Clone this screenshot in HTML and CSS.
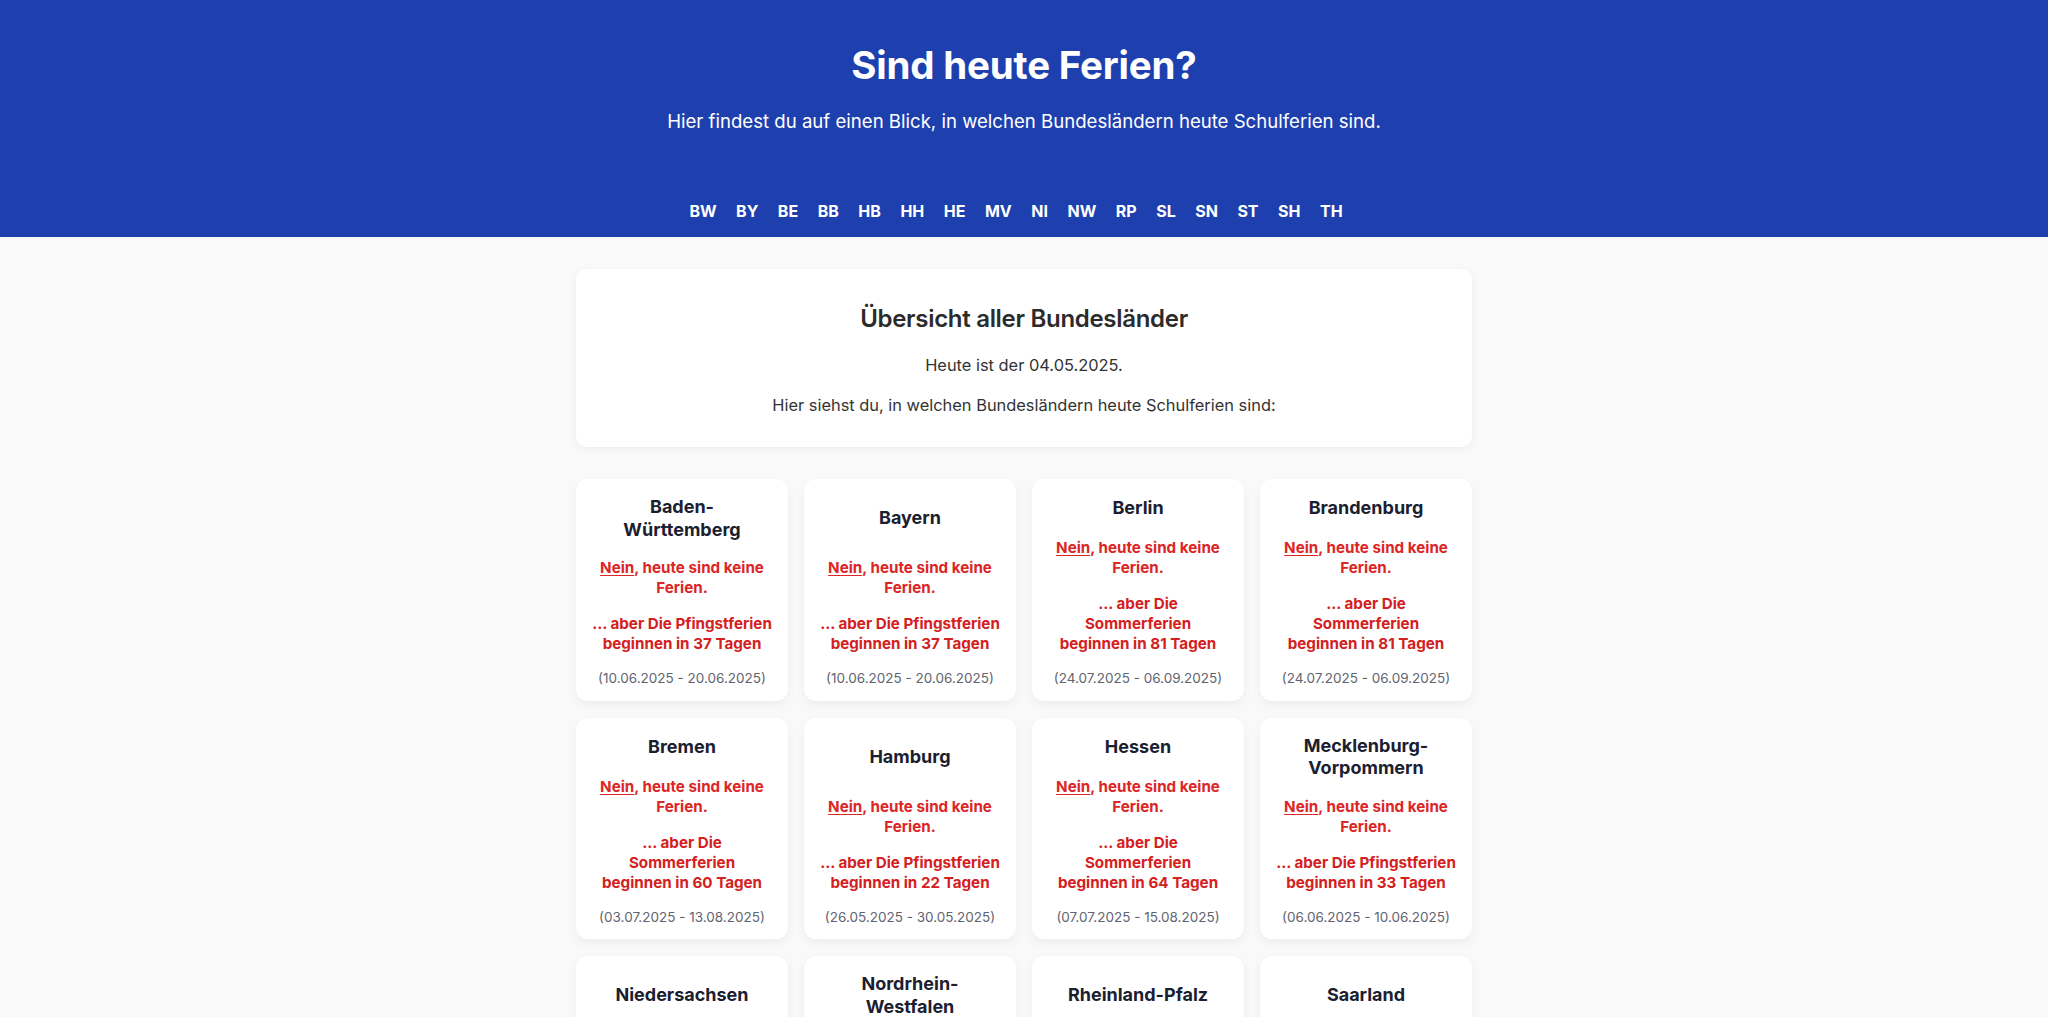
FILE: index.html
```html
<!DOCTYPE html>
<html lang="de">
<head>
<meta charset="utf-8">
<title>Sind heute Ferien?</title>
<link rel="stylesheet" href="styles.css">
</head>
<body>
<header class="hero">
  <h1 class="hero-title">Sind heute Ferien?</h1>
  <p class="hero-sub">Hier findest du auf einen Blick, in welchen Bundesländern heute Schulferien sind.</p>
  <nav class="states-nav">
    <a href="#bw">BW</a><a href="#by">BY</a><a href="#be">BE</a><a href="#bb">BB</a><a href="#hb">HB</a><a href="#hh">HH</a><a href="#he">HE</a><a href="#mv">MV</a><a href="#ni">NI</a><a href="#nw">NW</a><a href="#rp">RP</a><a href="#sl">SL</a><a href="#sn">SN</a><a href="#st">ST</a><a href="#sh">SH</a><a href="#th">TH</a>
  </nav>
</header>

<main class="container">
  <section class="overview">
    <h2 class="overview-title">Übersicht aller Bundesländer</h2>
    <p class="overview-text">Heute ist der 04.05.2025.</p>
    <p class="overview-text">Hier siehst du, in welchen Bundesländern heute Schulferien sind:</p>
  </section>

  <section class="grid">
    <article class="card" id="bw">
      <div class="card-head"><h3 class="card-title">Baden-Württemberg</h3></div>
      <p class="status"><a class="status-link" href="#">Nein</a>, heute sind keine Ferien.</p>
      <p class="next">... aber Die Pfingstferien <span class="next-count">beginnen in 37 Tagen</span></p>
      <p class="range">(10.06.2025 - 20.06.2025)</p>
    </article>
    <article class="card" id="by">
      <div class="card-head"><h3 class="card-title">Bayern</h3></div>
      <p class="status"><a class="status-link" href="#">Nein</a>, heute sind keine Ferien.</p>
      <p class="next">... aber Die Pfingstferien <span class="next-count">beginnen in 37 Tagen</span></p>
      <p class="range">(10.06.2025 - 20.06.2025)</p>
    </article>
    <article class="card" id="be">
      <div class="card-head"><h3 class="card-title">Berlin</h3></div>
      <p class="status"><a class="status-link" href="#">Nein</a>, heute sind keine Ferien.</p>
      <p class="next">... aber Die Sommerferien <span class="next-count">beginnen in 81 Tagen</span></p>
      <p class="range">(24.07.2025 - 06.09.2025)</p>
    </article>
    <article class="card" id="bb">
      <div class="card-head"><h3 class="card-title">Brandenburg</h3></div>
      <p class="status"><a class="status-link" href="#">Nein</a>, heute sind keine Ferien.</p>
      <p class="next">... aber Die Sommerferien <span class="next-count">beginnen in 81 Tagen</span></p>
      <p class="range">(24.07.2025 - 06.09.2025)</p>
    </article>
    <article class="card" id="hb">
      <div class="card-head"><h3 class="card-title">Bremen</h3></div>
      <p class="status"><a class="status-link" href="#">Nein</a>, heute sind keine Ferien.</p>
      <p class="next">... aber Die Sommerferien <span class="next-count">beginnen in 60 Tagen</span></p>
      <p class="range">(03.07.2025 - 13.08.2025)</p>
    </article>
    <article class="card" id="hh">
      <div class="card-head"><h3 class="card-title">Hamburg</h3></div>
      <p class="status"><a class="status-link" href="#">Nein</a>, heute sind keine Ferien.</p>
      <p class="next">... aber Die Pfingstferien <span class="next-count">beginnen in 22 Tagen</span></p>
      <p class="range">(26.05.2025 - 30.05.2025)</p>
    </article>
    <article class="card" id="he">
      <div class="card-head"><h3 class="card-title">Hessen</h3></div>
      <p class="status"><a class="status-link" href="#">Nein</a>, heute sind keine Ferien.</p>
      <p class="next">... aber Die Sommerferien <span class="next-count">beginnen in 64 Tagen</span></p>
      <p class="range">(07.07.2025 - 15.08.2025)</p>
    </article>
    <article class="card" id="mv">
      <div class="card-head"><h3 class="card-title">Mecklenburg-Vorpommern</h3></div>
      <p class="status"><a class="status-link" href="#">Nein</a>, heute sind keine Ferien.</p>
      <p class="next">... aber Die Pfingstferien <span class="next-count">beginnen in 33 Tagen</span></p>
      <p class="range">(06.06.2025 - 10.06.2025)</p>
    </article>
    <article class="card" id="ni">
      <div class="card-head"><h3 class="card-title">Niedersachsen</h3></div>
      <p class="status"><a class="status-link" href="#">Nein</a>, heute sind keine Ferien.</p>
      <p class="next">... aber Die Sommerferien <span class="next-count">beginnen in 60 Tagen</span></p>
      <p class="range">(03.07.2025 - 13.08.2025)</p>
    </article>
    <article class="card" id="nw">
      <div class="card-head"><h3 class="card-title">Nordrhein-Westfalen</h3></div>
      <p class="status"><a class="status-link" href="#">Nein</a>, heute sind keine Ferien.</p>
      <p class="next">... aber Die Sommerferien <span class="next-count">beginnen in 71 Tagen</span></p>
      <p class="range">(14.07.2025 - 26.08.2025)</p>
    </article>
    <article class="card" id="rp">
      <div class="card-head"><h3 class="card-title">Rheinland-Pfalz</h3></div>
      <p class="status"><a class="status-link" href="#">Nein</a>, heute sind keine Ferien.</p>
      <p class="next">... aber Die Sommerferien <span class="next-count">beginnen in 64 Tagen</span></p>
      <p class="range">(07.07.2025 - 15.08.2025)</p>
    </article>
    <article class="card" id="sl">
      <div class="card-head"><h3 class="card-title">Saarland</h3></div>
      <p class="status"><a class="status-link" href="#">Nein</a>, heute sind keine Ferien.</p>
      <p class="next">... aber Die Sommerferien <span class="next-count">beginnen in 64 Tagen</span></p>
      <p class="range">(07.07.2025 - 14.08.2025)</p>
    </article>
    <article class="card" id="sn">
      <div class="card-head"><h3 class="card-title">Sachsen</h3></div>
      <p class="status"><a class="status-link" href="#">Nein</a>, heute sind keine Ferien.</p>
      <p class="next">... aber Die Sommerferien <span class="next-count">beginnen in 55 Tagen</span></p>
      <p class="range">(28.06.2025 - 08.08.2025)</p>
    </article>
    <article class="card" id="st">
      <div class="card-head"><h3 class="card-title">Sachsen-Anhalt</h3></div>
      <p class="status"><a class="status-link" href="#">Nein</a>, heute sind keine Ferien.</p>
      <p class="next">... aber Die Sommerferien <span class="next-count">beginnen in 55 Tagen</span></p>
      <p class="range">(28.06.2025 - 08.08.2025)</p>
    </article>
    <article class="card" id="sh">
      <div class="card-head"><h3 class="card-title">Schleswig-Holstein</h3></div>
      <p class="status"><a class="status-link" href="#">Nein</a>, heute sind keine Ferien.</p>
      <p class="next">... aber Die Sommerferien <span class="next-count">beginnen in 85 Tagen</span></p>
      <p class="range">(28.07.2025 - 06.09.2025)</p>
    </article>
    <article class="card" id="th">
      <div class="card-head"><h3 class="card-title">Thüringen</h3></div>
      <p class="status"><a class="status-link" href="#">Nein</a>, heute sind keine Ferien.</p>
      <p class="next">... aber Die Sommerferien <span class="next-count">beginnen in 55 Tagen</span></p>
      <p class="range">(28.06.2025 - 08.08.2025)</p>
    </article>
  </section>
</main>
</body>
</html>
```

FILE: styles.css
```css
* { box-sizing: border-box; }

body {
  margin: 0;
  background: #f9f9f9;
  font-family: Inter, "Noto Sans", "Liberation Sans", sans-serif;
  color: #333333;
}

.hero {
  background: #1e40ae;
  color: #ffffff;
  text-align: center;
  padding: 44px 16px 16px;
}

.hero-title {
  margin: 0;
  font-size: 38.5px;
  line-height: 42px;
  font-weight: 700;
  letter-spacing: -0.2px;
}

.hero-sub {
  margin: 21px 0 0;
  font-size: 18.6px;
  line-height: 28px;
  font-weight: 400;
}

.states-nav {
  margin-top: 66px;
  padding-right: 16px;
  display: flex;
  justify-content: center;
  gap: 19.5px;
}

.states-nav a {
  color: #ffffff;
  text-decoration: none;
  font-size: 16px;
  line-height: 20px;
  font-weight: 700;
}

.container {
  max-width: 896px;
  margin: 32px auto;
}

.overview {
  background: #ffffff;
  border-radius: 10px;
  box-shadow: 0 2px 8px rgba(0, 0, 0, 0.05);
  text-align: center;
  padding: 32px 24px 30px;
}

.overview-title {
  margin: 0 0 16px;
  font-size: 24px;
  line-height: 36px;
  font-weight: 600;
  color: #2b2b2b;
  letter-spacing: -0.3px;
}

.overview-text {
  margin: 16px 0 0;
  font-size: 16.4px;
  line-height: 24px;
  color: #333333;
}

.overview-title + .overview-text { margin-top: 0; }

.grid {
  margin-top: 32px;
  display: grid;
  grid-template-columns: repeat(4, 1fr);
  gap: 17px 16px;
}

.card {
  background: #ffffff;
  border-radius: 12px;
  box-shadow: 0 4px 10px rgba(0, 0, 0, 0.05);
  padding: 17px 15px 12.5px;
  display: flex;
  flex-direction: column;
  text-align: center;
}

.card-head {
  flex: 1;
  display: flex;
  align-items: center;
  justify-content: center;
  margin: 0 2px 17px;
}

.card-title {
  margin: 0;
  font-size: 18px;
  line-height: 22.5px;
  font-weight: 700;
  color: #1a2030;
}

.status,
.next {
  margin: 0;
  font-size: 15.2px;
  line-height: 20px;
  font-weight: 700;
  color: #dc2626;
}

.status-link {
  color: #dc2626;
  text-decoration: underline;
  text-underline-offset: 2px;
}

.next {
  margin-top: 16px;
  color: #d42020;
}

.next-count {
  display: block;
}

.range {
  margin: 14px 0 0;
  font-size: 13.5px;
  line-height: 20px;
  color: #5f6470;
}
```
